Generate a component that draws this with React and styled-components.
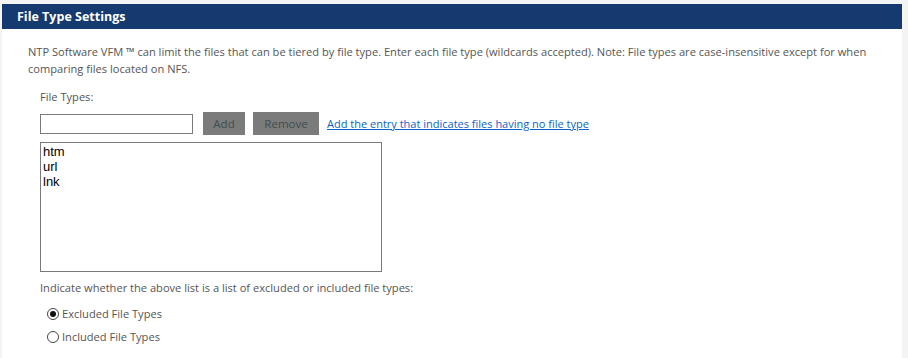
import styled, { createGlobalStyle } from 'styled-components';

// ── Global ───────────────────────────────────────────────────
const Global = createGlobalStyle`
  html, body { margin: 0; padding: 0; background: #f4f4f4; }
  body { font-family: 'Open Sans', 'Noto Sans', sans-serif; }
`;

// ── Panel ────────────────────────────────────────────────────
const Page = styled.div`
  padding: 4px 6px 0 2px;
  height: 354px;
`;

const Panel = styled.section`
  background: #fff;
  height: 100%;
  display: flex;
  flex-direction: column;
`;

const Header = styled.h2`
  margin: 0;
  height: 25px;
  background: #143a6f;
  color: #fff;
  font-family: 'Open Sans', 'Noto Sans', sans-serif;
  font-size: 12.5px;
  font-weight: 700;
  line-height: 25px;
  padding-left: 15px;
`;

const Body = styled.div`
  padding: 14px 0 0 26px;
  display: flex;
  flex-direction: column;
`;

const Description = styled.p`
  margin: 0;
  font-size: 11.1px;
  line-height: 17px;
  color: #555;
`;

const Section = styled.div`
  padding-left: 12px;
  display: flex;
  flex-direction: column;
`;

const Label = styled.div`
  font-size: 11.1px;
  color: #555;
  line-height: 17px;
  margin-top: ${({ $top }) => $top}px;
`;

// ── Entry row ────────────────────────────────────────────────
const EntryRow = styled.div`
  display: flex;
  align-items: center;
  gap: 8px;
  margin-top: 7px;
  height: 23px;
`;

const TextInput = styled.input`
  box-sizing: border-box;
  width: 153px;
  height: 20px;
  border: 1px solid #7a7a7a;
  margin: 0 2px 0 0;
  padding: 0 3px;
  font: 12px 'Liberation Sans', sans-serif;
`;

const GrayBtn = styled.button`
  box-sizing: border-box;
  height: 23px;
  width: ${({ $w }) => $w}px;
  background: #7b7b7b;
  border: none;
  color: #3f4d4d;
  font-family: 'Open Sans', 'Noto Sans', sans-serif;
  font-size: 11.5px;
  padding: 0;
  cursor: pointer;
`;

const Link = styled.a`
  color: #0a64c8;
  font-size: 11px;
  text-decoration: underline;
  cursor: pointer;
`;

// ── List box ─────────────────────────────────────────────────
const ListBox = styled.div`
  box-sizing: border-box;
  width: 342px;
  height: 130px;
  margin-top: 7px;
  border: 1px solid #7a7a7a;
  padding: 1px 2px;
  font-family: 'Liberation Sans', Arial, sans-serif;
  font-size: 13px;
  line-height: 15px;
  color: #000;
`;

// ── Radios ───────────────────────────────────────────────────
const RadioGroup = styled.div`
  display: flex;
  flex-direction: column;
  gap: 6px;
  margin-top: 9px;
  padding-left: 7px;
`;

const RadioRow = styled.label`
  display: flex;
  align-items: center;
  gap: 3px;
  font-size: 11.1px;
  color: #555;
  line-height: 17px;
`;

const RadioDot = styled.span`
  box-sizing: border-box;
  width: 12px;
  height: 12px;
  border-radius: 50%;
  border: 1px solid #444;
  background: #fff;
  display: flex;
  align-items: center;
  justify-content: center;

  &::after {
    content: '';
    width: 6px;
    height: 6px;
    border-radius: 50%;
    background: ${({ $on }) => ($on ? '#111' : 'transparent')};
  }
`;

const fileTypes = ['htm', 'url', 'lnk'];

export default function App() {
  return (
    <>
      <Global />
      <Page>
        <Panel>
          <Header>File Type Settings</Header>
          <Body>
            <Description>
              NTP Software VFM ™ can limit the files that can be tiered by file type. Enter each file type (wildcards accepted). Note: File types are case-insensitive except for when
              <br />
              comparing files located on NFS.
            </Description>
            <Section>
              <Label $top={11}>File Types:</Label>
              <EntryRow>
                <TextInput type="text" />
                <GrayBtn $w={42}>Add</GrayBtn>
                <GrayBtn $w={66}>Remove</GrayBtn>
                <Link>Add the entry that indicates files having no file type</Link>
              </EntryRow>
              <ListBox>
                {fileTypes.map(t => <div key={t}>{t}</div>)}
              </ListBox>
              <Label $top={7}>Indicate whether the above list is a list of excluded or included file types:</Label>
              <RadioGroup>
                <RadioRow><RadioDot $on />Excluded File Types</RadioRow>
                <RadioRow><RadioDot />Included File Types</RadioRow>
              </RadioGroup>
            </Section>
          </Body>
        </Panel>
      </Page>
    </>
  );
}
